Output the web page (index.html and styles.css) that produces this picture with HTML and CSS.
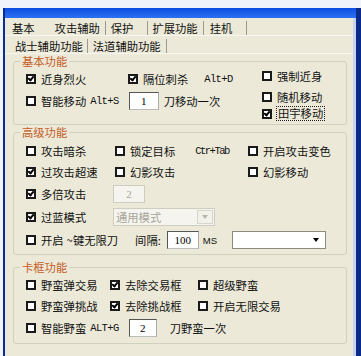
FILE: index.html
```html
<!DOCTYPE html>
<html lang="zh-CN">
<head>
    <meta charset="UTF-8">
    <meta name="viewport" content="width=device-width, initial-scale=1.0">
    <title>攻击辅助</title>
    <link rel="stylesheet" href="styles.css">
</head>
<body>
    <div class="window">
        <div class="titlebar"></div>
        <div class="dialog">
            <div class="tabs tabs-main">
                <span class="tab tab-first">基本</span>
                <span class="tab tab-active">攻击辅助</span>
                <span class="tab tab-short">保护</span>
                <span class="tab tab-ext">扩展功能</span>
                <span class="tab tab-last">挂机</span>
            </div>
            <div class="tabs tabs-sub">
                <span class="tab tab-warrior">战士辅助功能</span>
                <span class="tab tab-mage">法道辅助功能</span>
            </div>

            <!-- 基本功能 -->
            <fieldset class="group group-basic">
                <legend>基本功能</legend>
                <div class="basic-body">
                    <div class="basic-left">
                        <div class="row">
                            <label class="chk b1"><span class="cb on"></span>近身烈火</label>
                            <label class="chk"><span class="cb on"></span>隔位刺杀</label>
                            <span class="key key-gap">Alt+D</span>
                        </div>
                        <div class="row tall">
                            <label class="chk"><span class="cb"></span>智能移动</label>
                            <span class="key">Alt+S</span>
                            <input type="text" class="num num-move" value="1">
                            <span class="after-num">刀移动一次</span>
                        </div>
                    </div>
                    <div class="basic-right">
                        <label class="chk item"><span class="cb"></span>强制近身</label>
                        <label class="chk item item-gap"><span class="cb"></span>随机移动</label>
                        <label class="chk item"><span class="cb on"></span><span class="focus">田宇移动</span></label>
                    </div>
                </div>
            </fieldset>

            <!-- 高级功能 -->
            <fieldset class="group group-adv">
                <legend>高级功能</legend>
                <div class="row">
                    <label class="chk c1"><span class="cb"></span>攻击暗杀</label>
                    <div class="c2">
                        <label class="chk"><span class="cb"></span>锁定目标</label>
                        <span class="key key-tab">Ctr+Tab</span>
                    </div>
                    <label class="chk c3"><span class="cb"></span>开启攻击变色</label>
                </div>
                <div class="row">
                    <label class="chk c1"><span class="cb on"></span>过攻击超速</label>
                    <label class="chk c2"><span class="cb"></span>幻影攻击</label>
                    <label class="chk c3"><span class="cb"></span>幻影移动</label>
                </div>
                <div class="row tall">
                    <label class="chk c1"><span class="cb on"></span>多倍攻击</label>
                    <input type="text" class="num num-off" value="2" disabled>
                </div>
                <div class="row tall">
                    <label class="chk c1"><span class="cb on"></span>过蓝模式</label>
                    <span class="combo combo-off"><span class="combo-text">通用模式</span><span class="combo-btn"><span class="arrow"></span></span></span>
                </div>
                <div class="row tall">
                    <label class="chk"><span class="cb"></span>开启</label>
                    <span class="hint">~键无限刀</span>
                    <span class="hint-label">间隔:</span>
                    <input type="text" class="num num-wide" value="100">
                    <span class="unit">MS</span>
                    <span class="combo combo-on"><span class="combo-text"></span><span class="combo-btn"><span class="arrow"></span></span></span>
                </div>
            </fieldset>

            <!-- 卡框功能 -->
            <fieldset class="group group-frame">
                <legend>卡框功能</legend>
                <div class="row">
                    <label class="chk k1"><span class="cb"></span>野蛮弹交易</label>
                    <label class="chk k2"><span class="cb on"></span>去除交易框</label>
                    <label class="chk"><span class="cb"></span>超级野蛮</label>
                </div>
                <div class="row">
                    <label class="chk k1"><span class="cb"></span>野蛮弹挑战</label>
                    <label class="chk k2"><span class="cb on"></span>去除挑战框</label>
                    <label class="chk"><span class="cb"></span>开启无限交易</label>
                </div>
                <div class="row tall">
                    <label class="chk"><span class="cb"></span>智能野蛮</label>
                    <span class="key">ALT+G</span>
                    <input type="text" class="num num-brute" value="2">
                    <span class="after-num after-brute">刀野蛮一次</span>
                </div>
            </fieldset>
        </div>
    </div>
</body>
</html>
```

FILE: styles.css
```css
body {
    margin: 0;
    background-color: #f1f4fb;
    font-family: "Noto Sans CJK SC", sans-serif;
    font-size: 11.3px;
    color: #111;
}

.window {
    margin: 8px 0 0 3px;
    height: 348px;
    background-color: #ccd3f0;
    border-left: 2px solid #0b2d8e;
    border-right: 5px solid #0a2a8a;
}

.titlebar {
    height: 10px;
    background: linear-gradient(#0c4fe0, #2c70f3);
}

.dialog {
    height: 338px;
    margin-right: 3px;
    background-color: #ece9d8;
    overflow: hidden;
}

/* tab strips */
.tabs {
    display: flex;
    align-items: center;
    height: 18px;
    padding-top: 2px;
    box-sizing: border-box;
    border-bottom: 1px solid #f7f6ef;
}

.tab {
    line-height: 14px;
    border-right: 1px solid #9c9a90;
}

.tabs-main { padding-left: 7px; }
.tabs-sub { padding-left: 10px; }

.tab-first { padding-right: 20px; border-right: none; }
.tab-active { padding-right: 5px; }
.tab-short { padding: 0 14px 0 5px; }
.tab-ext { padding: 0 5px 0 4px; }
.tab-last { padding: 0 14px 0 6px; }
.tab-warrior { padding-right: 4px; }
.tab-mage { padding: 0 5px; }

/* group boxes */
.group {
    margin: 0 6px 0 8px;
    padding: 0 0 0 12px;
    border: 1px solid #d0d0bf;
    border-radius: 3px;
    min-width: 0;
}

.group legend {
    margin-left: -6px;
    padding: 0 2px;
    line-height: 14px;
    color: #c45c26;
}

.group-basic { padding-bottom: 2px; }
.group-adv { padding-top: 4px; padding-bottom: 5px; }
.group-frame { margin-top: 5px; padding-top: 3px; padding-bottom: 6px; }

.row {
    display: flex;
    align-items: center;
    height: 16px;
}

.row.tall { height: 18px; }

.group-adv .row + .row,
.group-frame .row + .row {
    margin-top: 5px;
}

.basic-body { display: flex; }

.basic-left {
    width: 236px;
    padding-top: 3px;
}

.basic-left .row.tall { margin-top: 5px; }

.basic-right {
    display: flex;
    flex-direction: column;
    margin-top: -1px;
}

.item { height: 17px; }
.item-gap { margin-top: 4px; }

.b1 { width: 102px; }
.c1 { width: 89px; }
.c2 { width: 133px; display: flex; align-items: center; }
.k1 { width: 84px; }
.k2 { width: 88px; }

/* checkbox */
.chk {
    display: flex;
    align-items: center;
    gap: 5px;
    line-height: 16px;
    white-space: nowrap;
}

.cb {
    position: relative;
    flex: none;
    width: 10px;
    height: 10px;
    box-sizing: border-box;
    border: 2px solid #1a1a1a;
    background-color: #fff;
}

.cb.on::after {
    content: "";
    position: absolute;
    left: 1px;
    top: -1px;
    width: 2px;
    height: 4px;
    border: solid #000;
    border-width: 0 2px 2px 0;
    transform: rotate(40deg);
}

.focus {
    outline: 1px dotted #222;
    padding: 0 1px;
    line-height: 13px;
}

/* text bits */
.key {
    font-family: "Liberation Mono", monospace;
    font-size: 10.5px;
    letter-spacing: -0.6px;
    margin-left: 4px;
}

.key-gap { margin-left: 16px; }
.key-tab { margin-left: 20px; letter-spacing: -1.5px; }

.after-num { margin-left: 5px; }
.after-brute { margin-left: 13px; }

.hint { margin-left: 3px; }
.hint-label { margin-left: 17px; }

.unit {
    margin-left: 4px;
    font-family: "Liberation Sans", sans-serif;
    font-size: 9.5px;
}

/* inputs */
.num {
    box-sizing: border-box;
    height: 18px;
    width: 30px;
    padding: 0;
    font-family: "Liberation Serif", serif;
    font-size: 11px;
    text-align: center;
    color: #000;
    background-color: #fff;
    border: 1px solid #555;
    border-right-color: #aaa;
    border-bottom-color: #bbb;
}

.num-move { margin-left: 10px; }
.num-wide { width: 32px; margin-left: 6px; }
.num-brute { width: 28px; margin-left: 10px; }

.num-off {
    width: 32px;
    margin-left: -2px;
    color: #a8a69a;
    background-color: #f5f4ee;
    border: 1px solid #cfcdc0;
}

.combo {
    display: flex;
    box-sizing: border-box;
    height: 18px;
    border: 1px solid #8d8b80;
    background-color: #fff;
}

.combo-off {
    width: 102px;
    margin-left: -2px;
    border-color: #cfcdc0;
    background-color: #f5f4ee;
}

.combo-on {
    width: 94px;
    margin-left: 15px;
}

.combo-text {
    flex: 1;
    padding-left: 2px;
    line-height: 16px;
    color: #a8a69a;
}

.combo-btn {
    display: flex;
    align-items: center;
    justify-content: center;
    width: 14px;
    margin: 1px;
    background-color: #f2f1ea;
    border: 1px solid #d8d6ca;
}

.combo-on .combo-btn {
    background-color: #fff;
    border-color: #fff;
}

.arrow {
    width: 0;
    height: 0;
    border-left: 3px solid transparent;
    border-right: 3px solid transparent;
    border-top: 4px solid #b9b7ab;
}

.combo-on .arrow { border-top-color: #000; }
```
